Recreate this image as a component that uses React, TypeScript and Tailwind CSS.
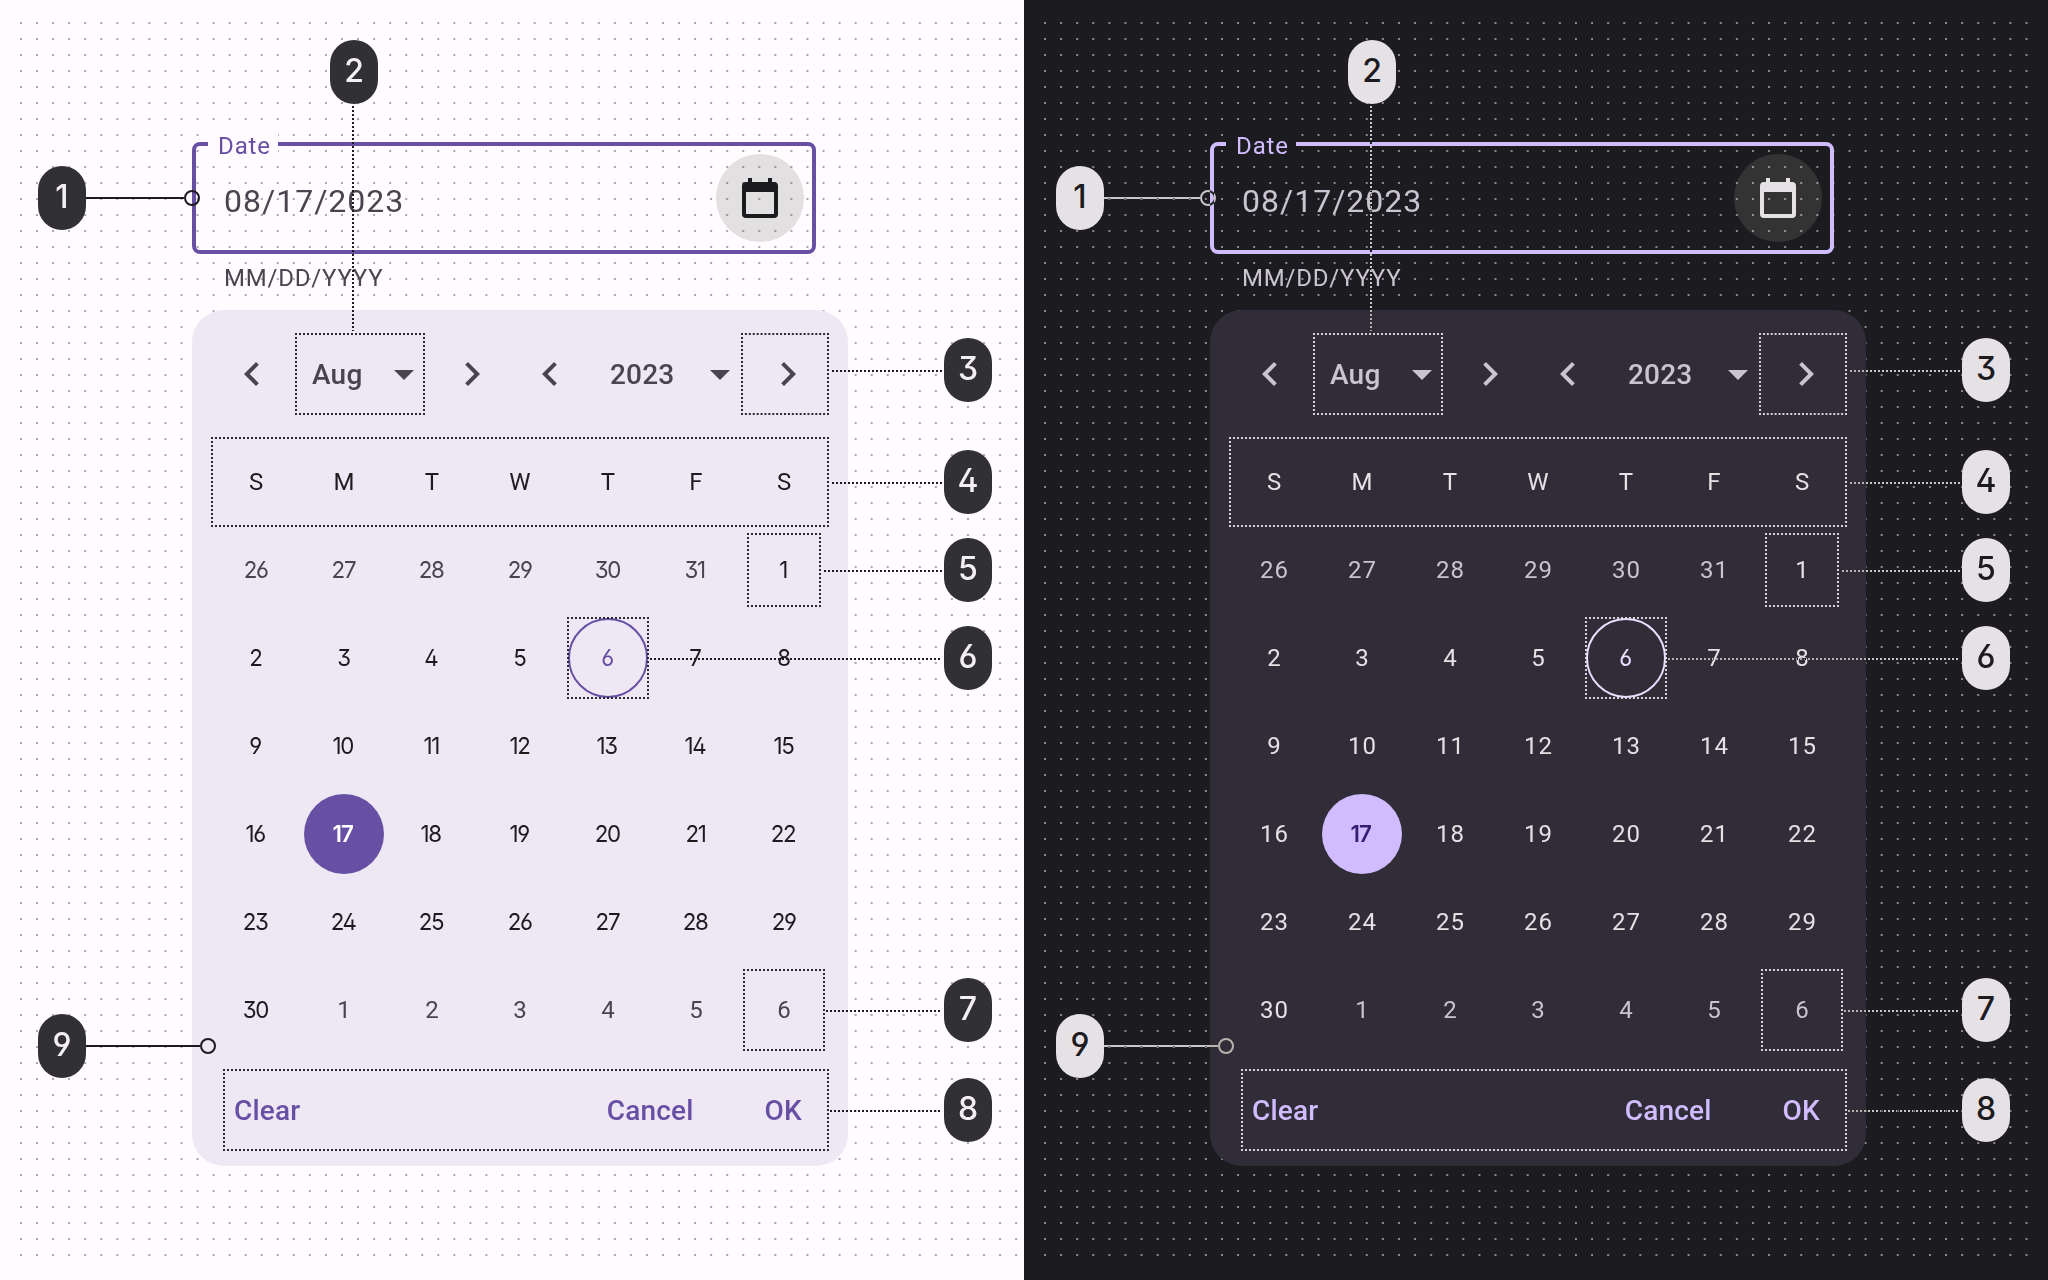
import React from "react";

type Theme = {
  name: "light" | "dark";
  page: string;
  inset: string;
  layer: string;
  cover: string;
  outline: string;
  accent: string;
  muted: string;
  strong: string;
  surface: string;
  halo: string;
  badge: string;
  selected: string;
  today: string;
  dayFont: string;
  line: string;
  lineBlend: string;
  frame: string;
  dot: string;
  dotStart: number;
  dotPitch: number;
};

const geo = "font-['Inter',sans-serif] [font-feature-settings:'cv03','cv04','ss01']";

const light: Theme = {
  name: "light",
  page: "bg-[#fffbff]",
  inset: "pl-[192px]",
  layer: "left-0",
  cover: "bg-[#fffbff]",
  outline: "border-[#6750a4]",
  accent: "text-[#6750a4]",
  muted: "text-[#49454f]",
  strong: "text-[#1c1b1f]",
  surface: "bg-[#eee8f4]",
  halo: "bg-[#1c1f12]/12",
  badge: "bg-[#313033] text-[#f4eff4]",
  selected: "bg-[#6750a4] text-white",
  today: "border-[#6750a4] text-[#6750a4]",
  dayFont: "font-['Inter',sans-serif] [font-feature-settings:'cv03','cv04','ss01'] text-[23.5px] scale-x-95 tracking-[-1.4px] mr-[1.8px]",
  line: "#1c1b1f",
  lineBlend: "",
  frame: "#1c1b1f",
  dot: "#aaa6ab",
  dotStart: 20,
  dotPitch: 16.05,
};

const dark: Theme = {
  name: "dark",
  page: "bg-[#1c1b1f]",
  inset: "pl-[186px]",
  layer: "-left-[6px]",
  cover: "bg-[#1c1b1f]",
  outline: "border-[#d0bcff]",
  accent: "text-[#d0bcff]",
  muted: "text-[#cac4d0]",
  strong: "text-[#e6e1e5]",
  surface: "bg-[#302d38]",
  halo: "bg-[#e3e8d0]/12",
  badge: "bg-[#e6e1e5] text-[#1c1b1f]",
  selected: "bg-[#d0bcff] text-[#381e72]",
  today: "border-[#eaddff] text-[#eaddff]",
  dayFont: "font-['Roboto',sans-serif] text-[24px] tracking-[1px] -mr-px",
  line: "#e6e1e5",
  lineBlend: "mix-blend-difference",
  frame: "#e6e1e5",
  dot: "#8a888c",
  dotStart: 26,
  dotPitch: 16.09,
};

function DotGrid({ t }: { t: Theme }) {
  const rows = Array.from({ length: 78 }, (_, i) => 23 + i * 16);
  return (
    <svg className={"absolute top-0 " + t.layer} width="1030" height="1280">
      {rows.map((y) => (
        <line
          key={y}
          x1={t.dotStart}
          x2={t.name === "light" ? 1018 : 1012}
          y1={y}
          y2={y}
          stroke={t.dot}
          strokeWidth="2"
          strokeDasharray={`2 ${t.dotPitch - 2}`}
        />
      ))}
    </svg>
  );
}

function Chevron({ right }: { right?: boolean }) {
  return (
    <svg width="48" height="48" viewBox="0 0 24 24" fill="currentColor" className="shrink-0">
      <path
        d={
          right
            ? "M10 6L8.59 7.41 13.17 12l-4.58 4.59L10 18l6-6z"
            : "M15.41 7.41L14 6l-6 6 6 6 1.41-1.41L10.83 12z"
        }
      />
    </svg>
  );
}

function Caret() {
  return (
    <svg width="48" height="48" viewBox="0 0 24 24" fill="currentColor" className="shrink-0">
      <path d="M7 10l5 5 5-5z" />
    </svg>
  );
}

function CalendarIcon() {
  return (
    <svg width="36" height="40" viewBox="0 0 36 40" fill="currentColor" fillRule="evenodd">
      <path d="M6 0h4v4h16V0h4v4h2a4 4 0 0 1 4 4v28a4 4 0 0 1-4 4H4a4 4 0 0 1-4-4V8a4 4 0 0 1 4-4h2zM4 14v22h28V14z" />
    </svg>
  );
}

function DateField({ t }: { t: Theme }) {
  return (
    <div className={"relative flex h-28 w-[624px] items-center justify-between rounded-lg border-4 pr-2 pl-[28px] " + t.outline}>
      <span className={"absolute -top-4 left-3 h-8 w-[70px] pl-[10px] text-2xl leading-8 tracking-[0.9px] " + t.cover + " " + t.accent}>
        Date
      </span>
      <span className={"pt-[6px] text-[32px] leading-10 tracking-[1px] " + t.muted}>08/17/2023</span>
      <span className={"flex size-[88px] items-center justify-center rounded-full " + t.halo + " " + t.strong}>
        <CalendarIcon />
      </span>
    </div>
  );
}

const weekdays = ["S", "M", "T", "W", "T", "F", "S"];
const days = [
  26, 27, 28, 29, 30, 31, 1, 2, 3, 4, 5, 6, 7, 8, 9, 10, 11, 12, 13, 14, 15, 16, 17, 18, 19, 20, 21, 22, 23, 24, 25, 26,
  27, 28, 29, 30, 1, 2, 3, 4, 5, 6,
];

// Only the day digits of the range 26 July to 6 September are listed; index 11 is today, index 22 is selected.
function Day({ t, day, index }: { t: Theme; day: number; index: number }) {
  if (index === 11)
    return (
      <div className="flex size-[88px] items-center justify-center">
        <div className={"flex size-20 items-center justify-center rounded-full border-2 text-[23.5px] leading-8 " + geo + " " + t.today}>
          <span className="scale-x-95">{day}</span>
        </div>
      </div>
    );
  if (index === 22)
    return (
      <div className="flex size-[88px] items-center justify-center">
        <div className={"flex size-20 items-center justify-center rounded-full text-[23.5px] leading-8 font-semibold " + geo + " " + t.selected}>
          <span className="mr-[1.8px] scale-x-95 tracking-[-1px]">{day}</span>
        </div>
      </div>
    );
  const trailing = index > 35;
  const outside = index < 6 || trailing;
  return (
    <div className={"flex size-[88px] items-center justify-center leading-8 " + (outside ? t.muted : t.strong)}>
      <span className={trailing ? "text-2xl leading-8" : "leading-8 " + t.dayFont}>{day}</span>
    </div>
  );
}

function Picker({ t }: { t: Theme }) {
  return (
    <div className={"mt-4 flex h-[856px] w-[656px] flex-col rounded-[32px] pt-6 " + t.surface}>
      <div className={"flex h-20 items-center pl-9 text-[28px] font-medium tracking-[0.2px] " + t.muted}>
        <Chevron />
        <span className="w-[104px] shrink-0 pt-[2px] pl-9">Aug</span>
        <Caret />
        <span className="ml-5 flex">
          <Chevron right />
        </span>
        <span className="ml-[30px] flex">
          <Chevron />
        </span>
        <span className="w-[122px] shrink-0 pt-[2px] pl-[36px]">2023</span>
        <Caret />
        <span className="ml-5 flex">
          <Chevron right />
        </span>
      </div>
      <div className="mt-6 grid grid-cols-7 self-start pl-5">
        {weekdays.map((d, i) => (
          <div key={i} className={"flex size-[88px] items-center justify-center text-2xl leading-8 " + t.strong}>
            {d}
          </div>
        ))}
        {days.map((d, i) => (
          <Day key={i} t={t} day={d} index={i} />
        ))}
      </div>
      <div className={"mt-4 flex h-20 items-center pt-[2px] pr-[46px] pl-[42px] text-[28px] font-medium tracking-[0.2px] " + t.accent}>
        <span className="flex-1">Clear</span>
        <span className="mr-[71px]">Cancel</span>
        <span>OK</span>
      </div>
    </div>
  );
}

const frames = [
  { x: 295, y: 333, w: 130, h: 82 },
  { x: 741, y: 333, w: 88, h: 82 },
  { x: 211, y: 437, w: 618, h: 90 },
  { x: 747, y: 533, w: 74, h: 74 },
  { x: 567, y: 617, w: 82, h: 82 },
  { x: 743, y: 969, w: 82, h: 82 },
  { x: 223, y: 1069, w: 606, h: 82 },
];

const leaders = [
  { x: 832, y: 371 },
  { x: 832, y: 483 },
  { x: 824, y: 571 },
  { x: 650, y: 659 },
  { x: 826, y: 1011 },
  { x: 830, y: 1111 },
];

// Splits a side of n px into an odd number of equal steps so that every corner is a dash.
function dash(n: number) {
  const pairs = Math.round((n - 2) / 4);
  return `2 ${(n - 2) / pairs - 2}`;
}

function Frames({ t }: { t: Theme }) {
  return (
    <svg className={"absolute top-0 " + t.layer} width="1024" height="1280" stroke={t.frame} strokeWidth="2">
      {frames.map(({ x, y, w, h }) => (
        <g key={`${x}-${y}`} opacity="0.92">
          <line x1={x} x2={x + w} y1={y + 1} y2={y + 1} strokeDasharray={dash(w)} />
          <line x1={x} x2={x + w} y1={y + h - 1} y2={y + h - 1} strokeDasharray={dash(w)} />
          <line x1={x + 1} x2={x + 1} y1={y} y2={y + h} strokeDasharray={dash(h)} />
          <line x1={x + w - 1} x2={x + w - 1} y1={y} y2={y + h} strokeDasharray={dash(h)} />
        </g>
      ))}
    </svg>
  );
}

function Leaders({ t }: { t: Theme }) {
  const cx = t.name === "light" ? 192 : 190;
  return (
    <svg
      className={"absolute top-0 " + t.layer + " " + t.lineBlend}
      width="1024"
      height="1280"
      fill="none"
      stroke={t.line}
      strokeWidth="2"
    >
      <line x1="353" x2="353" y1="106" y2="331" strokeDasharray="2 2" />
      {leaders.map(({ x, y }) => (
        <line key={y} x1={x} x2="942" y1={y} y2={y} strokeDasharray="2 2" />
      ))}
      <line x1="86" x2={cx - 8} y1="198" y2="198" />
      <circle cx={cx} cy="198" r="7" />
      <line x1="86" x2="200" y1="1046" y2="1046" />
      <circle cx="208" cy="1046" r="7" />
    </svg>
  );
}

const badges = [
  { n: 1, pos: "left-[38px] top-[166px]" },
  { n: 2, pos: "left-[330px] top-[40px]" },
  { n: 3, pos: "left-[944px] top-[338px]" },
  { n: 4, pos: "left-[944px] top-[450px]" },
  { n: 5, pos: "left-[944px] top-[538px]" },
  { n: 6, pos: "left-[944px] top-[626px]" },
  { n: 7, pos: "left-[944px] top-[978px]" },
  { n: 8, pos: "left-[944px] top-[1078px]" },
  { n: 9, pos: "left-[38px] top-[1014px]" },
];

function Badges({ t }: { t: Theme }) {
  return (
    <div className={"absolute top-0 h-full w-[1024px] " + t.layer}>
      {badges.map(({ n, pos }) => (
        <div
          key={n}
          className={
            "absolute flex h-16 w-12 items-center justify-center rounded-3xl pb-[3px] text-[32px] leading-none font-medium " +
            geo + " " + t.badge + " " + pos
          }
        >
          <span>{n}</span>
        </div>
      ))}
    </div>
  );
}

function Panel({ t }: { t: Theme }) {
  return (
    <section className={"relative h-[1280px] w-[1024px] overflow-hidden " + t.page}>
      <DotGrid t={t} />
      <div className={"relative pt-[142px] " + t.inset}>
        <DateField t={t} />
        <p className={"mt-2 pl-8 text-2xl leading-8 tracking-[0.8px] " + t.muted}>MM/DD/YYYY</p>
        <Picker t={t} />
      </div>
      <Frames t={t} />
      <Leaders t={t} />
      <Badges t={t} />
    </section>
  );
}

export default function App() {
  return (
    <main className="flex h-[1280px] w-[2048px] font-['Roboto',sans-serif]">
      <Panel t={light} />
      <Panel t={dark} />
    </main>
  );
}
